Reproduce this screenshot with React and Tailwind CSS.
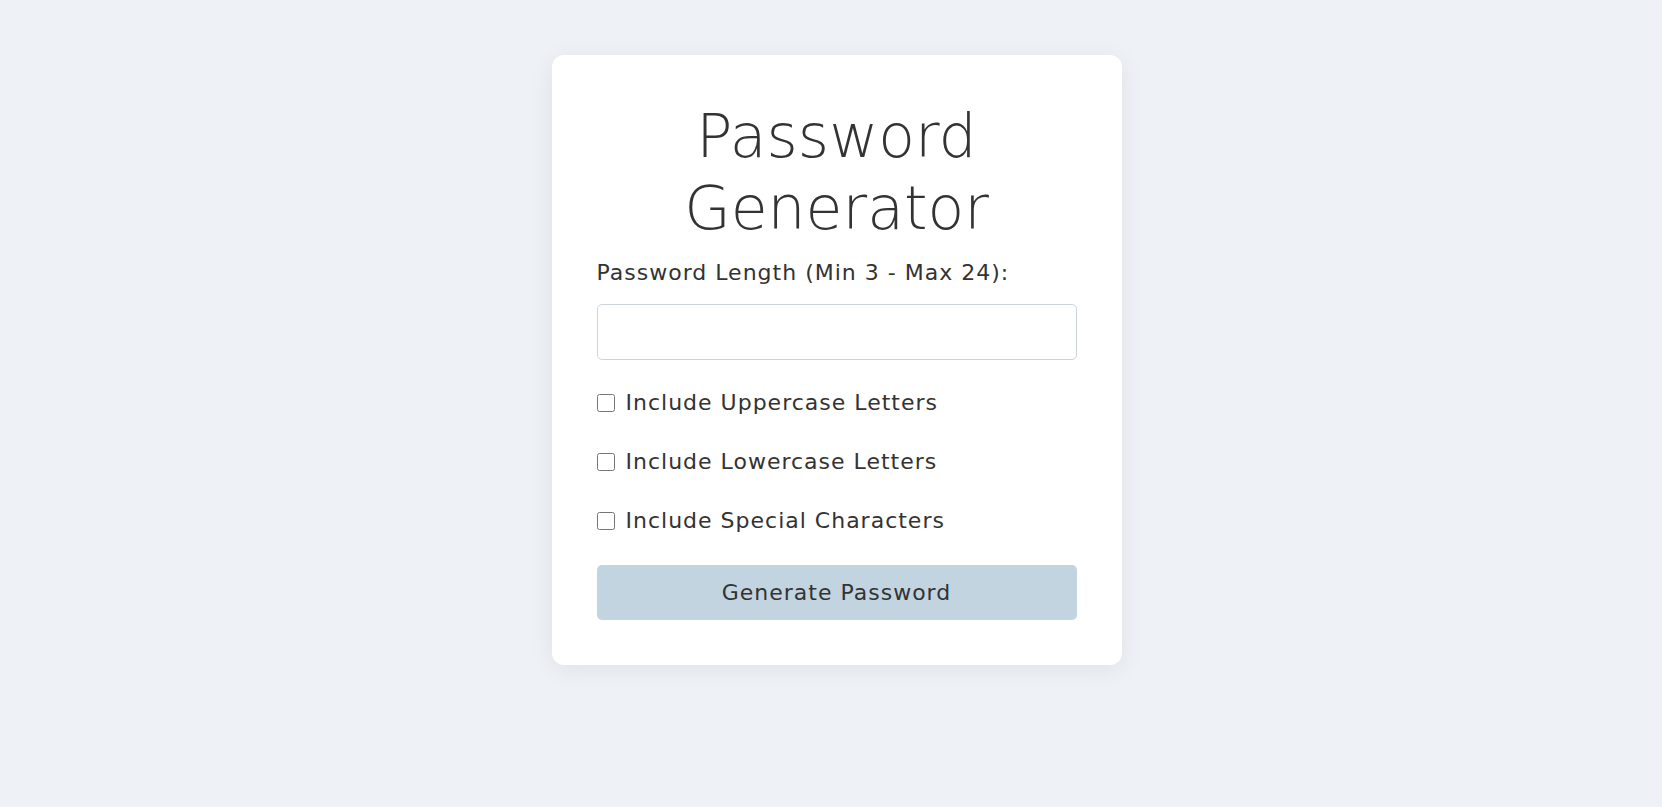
import React, { useState } from "react";

const App = () => {
  const [length, setLength] = useState("");
  const [upper, setUpper] = useState(false);
  const [lower, setLower] = useState(false);
  const [special, setSpecial] = useState(false);

  const options = [
    { label: "Include Uppercase Letters", value: upper, set: setUpper },
    { label: "Include Lowercase Letters", value: lower, set: setLower },
    { label: "Include Special Characters", value: special, set: setSpecial },
  ];

  return (
    <div className="min-h-screen bg-[#eef2f7] flex justify-center items-start pt-[55px] pl-[11px] font-['DejaVu_Sans',sans-serif] text-[#333]">
      <div className="w-[570px] bg-white rounded-[12px] shadow-[0_4px_24px_rgba(0,0,0,0.07)] p-[45px]">
        <h1 className="text-center text-[60px] leading-[72px] font-light">
          Password Generator
        </h1>

        <label className="block mt-[17px] text-[22px] leading-[24px] tracking-[1px]">
          Password Length (Min 3 - Max 24):
        </label>
        <input
          type="number"
          value={length}
          onChange={(e) => setLength(e.target.value)}
          className="block w-full mt-[19px] h-[56px] border border-[#ccd3da] rounded-[5px] px-3 text-[18px] outline-none"
        />

        <div className="mt-[23px] flex flex-col gap-[20px]">
          {options.map((opt, index) => (
            <label key={index} className="flex items-center h-[39px] text-[22px] tracking-[1px]">
              <input
                type="checkbox"
                checked={opt.value}
                onChange={(e) => opt.set(e.target.checked)}
                className="w-[18px] h-[18px] m-0 mr-[11px]"
              />
              {opt.label}
            </label>
          ))}
        </div>

        <button className="mt-[25px] w-full h-[55px] bg-[#c1d4df] rounded-[5px] text-[22px] tracking-[1px] text-[#333]">
          Generate Password
        </button>
      </div>
    </div>
  );
};

export default App;
